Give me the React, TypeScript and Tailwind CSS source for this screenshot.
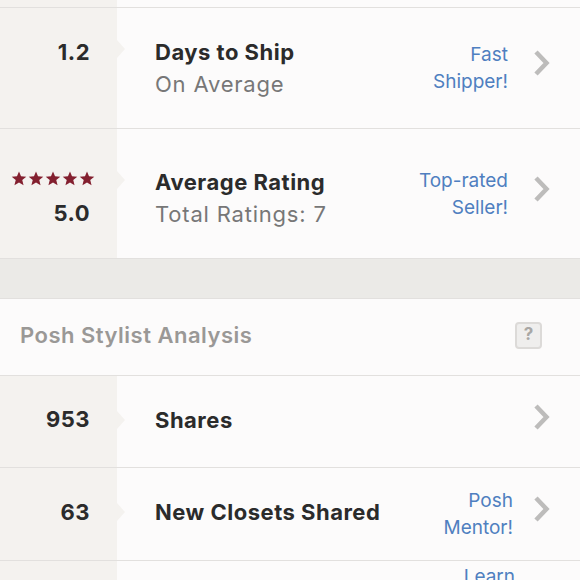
import type { ReactNode } from "react";

const FONT = "font-['Inter','Open_Sans',sans-serif]";

function Chevron() {
  return (
    <svg width="18" height="26" viewBox="0 0 18 26" className="shrink-0 -mt-[10px]">
      <path d="M3 2 L13.5 13 L3 24" fill="none" stroke="#bdbcbb" strokeWidth="4.5" />
    </svg>
  );
}

function Star() {
  return (
    <svg width="16" height="15" viewBox="0 0 24 23">
      <path
        d="M12 0.8 L15.1 8.2 L23.2 8.7 L17 13.9 L19 21.8 L12 17.5 L5 21.8 L7 13.9 L0.8 8.7 L8.9 8.2 Z"
        fill="#83202f"
      />
    </svg>
  );
}

interface RowProps {
  left: ReactNode;
  title: string;
  sub?: string;
  badge?: [string, string];
  badgeGap?: string;
  height: string;
  notchTop: string;
  shift?: string;
}

function StatRow({ left, title, sub, badge, badgeGap = "mr-[25px]", height, notchTop, shift = "" }: RowProps) {
  return (
    <div className={`flex ${height} border-b border-[#e2e0de]`}>
      <div className="relative w-[117px] shrink-0 bg-[#f4f2ef] flex items-center justify-end pr-[27px]">
        {left}
        <div
          className={`absolute ${notchTop} -right-[8px] w-0 h-0 border-y-[9px] border-y-transparent border-l-[8px] border-l-[#f4f2ef]`}
        />
      </div>
      <div className="flex-1 flex items-center pl-[38px] pr-[29px] bg-[#fcfbfb]">
        <div className={`flex-1 ${shift}`}>
          <div className="text-[22px] font-bold text-[#2b2b2b] leading-[32px] tracking-[0.5px]">{title}</div>
          {sub && <div className="text-[22px] text-[#777] leading-[32px] tracking-[0.8px]">{sub}</div>}
        </div>
        {badge && (
          <div className={`text-right text-[19px] leading-[27px] text-[#4f7fc0] ${badgeGap}`}>
            <div>{badge[0]}</div>
            <div>{badge[1]}</div>
          </div>
        )}
        <Chevron />
      </div>
    </div>
  );
}

export default function App() {
  return (
    <div className={`${FONT} w-[580px] h-[580px] overflow-hidden bg-[#fcfbfb]`}>
      {/* tail of previous row */}
      <div className="flex h-[8px] border-b border-[#e2e0de]">
        <div className="w-[117px] bg-[#f4f2ef]" />
        <div className="flex-1 bg-[#fcfbfb]" />
      </div>

      <StatRow
        height="h-[121px]"
        notchTop="top-[32px]"
        left={<span className="text-[22px] font-bold text-[#2b2b2b] tracking-[0.5px] -mt-[32px]">1.2</span>}
        title="Days to Ship"
        sub="On Average"
        badge={["Fast", "Shipper!"]}
      />

      <StatRow
        height="h-[130px]"
        notchTop="top-[42px]"
        shift="mt-[8px]"
        left={
          <div className="flex flex-col items-end -mr-[5px] mt-[14px]">
            <div className="flex gap-[1px]">
              <Star />
              <Star />
              <Star />
              <Star />
              <Star />
            </div>
            <span className="text-[22px] font-bold text-[#2b2b2b] tracking-[0.5px] mt-[11px] mr-[5px]">5.0</span>
          </div>
        }
        title="Average Rating"
        sub="Total Ratings: 7"
        badge={["Top-rated", "Seller!"]}
      />

      {/* divider band */}
      <div className="h-[40px] bg-[#ebeae7] border-b border-[#e2e0de]" />

      {/* section header */}
      <div className="h-[77px] flex items-center justify-between pl-[20px] pr-[38px] border-b border-[#e2e0de] bg-[#fcfbfb]">
        <span className="text-[22px] font-semibold text-[#9a9896] tracking-[0.5px] -mt-[4px]">Posh Stylist Analysis</span>
        <div className="w-[27px] h-[27px] -mt-[4px] rounded-[4px] border-2 border-[#dcdad8] bg-[#efeeed] flex items-center justify-center text-[17px] font-bold text-[#a9a7a5]">
          ?
        </div>
      </div>

      <StatRow
        height="h-[92px]"
        notchTop="top-[35px]"
        shift="-mt-[4px]"
        left={<span className="text-[22px] font-bold text-[#2b2b2b] tracking-[0.5px] -mt-[4px]">953</span>}
        title="Shares"
      />

      <StatRow
        height="h-[93px]"
        notchTop="top-[35px]"
        shift="-mt-[4px]"
        left={<span className="text-[22px] font-bold text-[#2b2b2b] tracking-[0.5px] -mt-[4px]">63</span>}
        title="New Closets Shared"
        badge={["Posh", "Mentor!"]}
        badgeGap="mr-[20px]"
      />

      <div className="flex h-[40px]">
        <div className="w-[117px] bg-[#f4f2ef]" />
        <div className="flex-1 flex justify-end pr-[65px] pt-[2px] bg-[#fcfbfb]">
          <span className="text-[19px] leading-[27px] text-[#4f7fc0]">Learn</span>
        </div>
      </div>
    </div>
  );
}
